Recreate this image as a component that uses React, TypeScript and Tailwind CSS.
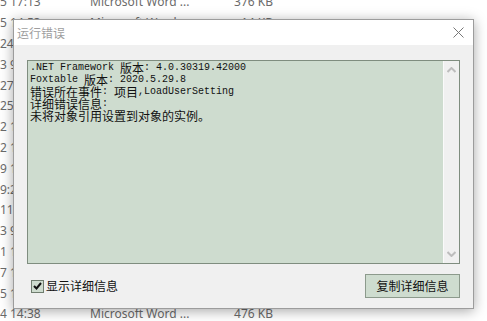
import React from 'react'

const ROWS = [
  { date:'5 17:13',  size:'376 KB' },
  { date:'5 14:53',  size:'14 KB' },
  { date:'24 10:05', size:'52 KB' },
  { date:'3 9:41',   size:'88 KB' },
  { date:'27 16:22', size:'31 KB' },
  { date:'25 11:10', size:'64 KB' },
  { date:'2 15:33',  size:'19 KB' },
  { date:'2 11:47',  size:'22 KB' },
  { date:'9 14:20',  size:'40 KB' },
  { date:'9:27',     size:'17 KB' },
  { date:'11 10:16', size:'73 KB' },
  { date:'3 9:02',   size:'35 KB' },
  { date:'1 16:40',  size:'28 KB' },
  { date:'7 13:55',  size:'61 KB' },
  { date:'5 10:31',  size:'45 KB' },
  { date:'4 14:38',  size:'476 KB' },
]

const LINES = [
  '.NET Framework 版本: 4.0.30319.42000',
  'Foxtable 版本: 2020.5.29.8',
  '错误所在事件: 项目,LoadUserSetting',
  '详细错误信息:',
  '未将对象引用设置到对象的实例。',
]

const CJK = /[\u3000-\u9fff\uff00-\uffef]+|[^\u3000-\u9fff\uff00-\uffef]+/g
const cjkFont = 'font-["Noto_Sans_CJK_SC",sans-serif] text-[12px] leading-[12px]'
const monoFont = 'font-["Liberation_Mono",monospace] text-[10px] leading-[12px]'

function MixedLine({ text }: { text: string }) {
  const parts = text.match(CJK) ?? []
  return (
    <div className="h-[12px] whitespace-pre text-[#111] flex items-end">
      {parts.map((p, i) =>
        /[\u3000-\u9fff\uff00-\uffef]/.test(p)
          ? <span key={i} className={cjkFont}>{p}</span>
          : <span key={i} className={monoFont}>{p}</span>
      )}
    </div>
  )
}

export default function App() {
  return (
    <div className="relative w-[487px] h-[321px] overflow-hidden bg-white">
      {/* explorer list behind */}
      <div className="mt-[-8px] font-['Noto_Sans',sans-serif] text-[12px] text-[#6b6b6b]">
        {ROWS.map((r, i) => (
          <div key={i} className="h-[20.8px] flex items-center">
            <span className="w-[90px] whitespace-nowrap">{r.date}</span>
            <span className="w-[143px] whitespace-nowrap">Microsoft Word ...</span>
            <span className="w-[40px] text-right whitespace-nowrap">{r.size}</span>
          </div>
        ))}
      </div>

      {/* dialog */}
      <div className="absolute left-[13px] top-[19px] w-[461px] h-[290px] border border-[#9c9c9c] bg-[#f0f0f0] flex flex-col shadow-[0_2px_12px_rgba(0,0,0,0.35)]">
        <div className="h-[25px] bg-white flex items-center justify-between pl-[3px] pr-[9px]">
          <span className="font-['Noto_Sans_CJK_SC',sans-serif] text-[12px] text-[#9e9e9e]">运行错误</span>
          <svg width="11" height="11" viewBox="0 0 11 11">
            <path d="M0.5 0.5 L10.5 10.5 M10.5 0.5 L0.5 10.5" stroke="#777" strokeWidth="1" fill="none" />
          </svg>
        </div>

        <div className="flex-1 flex flex-col px-[13px] pt-[15px] pb-[10px]">
          <div className="h-[204px] border border-[#7f8d7f] bg-[#cedccf] flex">
            <div className="flex-1 pl-[2px] pt-[1px]">
              {LINES.map((l, i) => <MixedLine key={i} text={l} />)}
            </div>
            <div className="w-[16px] bg-[#f0f0f0] border-l border-[#fafafa] flex flex-col justify-between items-center py-[6px]">
              <svg width="9" height="6" viewBox="0 0 9 6">
                <path d="M0.5 5 L4.5 1 L8.5 5" stroke="#bdbdbd" strokeWidth="2" fill="none" />
              </svg>
              <svg width="9" height="6" viewBox="0 0 9 6">
                <path d="M0.5 1 L4.5 5 L8.5 1" stroke="#bdbdbd" strokeWidth="2" fill="none" />
              </svg>
            </div>
          </div>

          <div className="mt-[10px] h-[24px] flex items-center justify-between">
            <label className="flex items-center gap-[2px] pl-[4px]">
              <span className="w-[13px] h-[13px] border border-[#6f7d6f] bg-[#cedccf] flex items-center justify-center">
                <svg width="9" height="8" viewBox="0 0 9 8">
                  <path d="M1 4 L3.5 6.5 L8 1" stroke="#111" strokeWidth="2" fill="none" />
                </svg>
              </span>
              <span className="font-['Noto_Sans_CJK_SC',sans-serif] text-[12px] text-[#111]">显示详细信息</span>
            </label>
            <button className="w-[95px] h-[24px] border border-[#8c9a8c] bg-[#cedccf] font-['Noto_Sans_CJK_SC',sans-serif] text-[12px] text-[#111]">
              复制详细信息
            </button>
          </div>
        </div>
      </div>
    </div>
  )
}
